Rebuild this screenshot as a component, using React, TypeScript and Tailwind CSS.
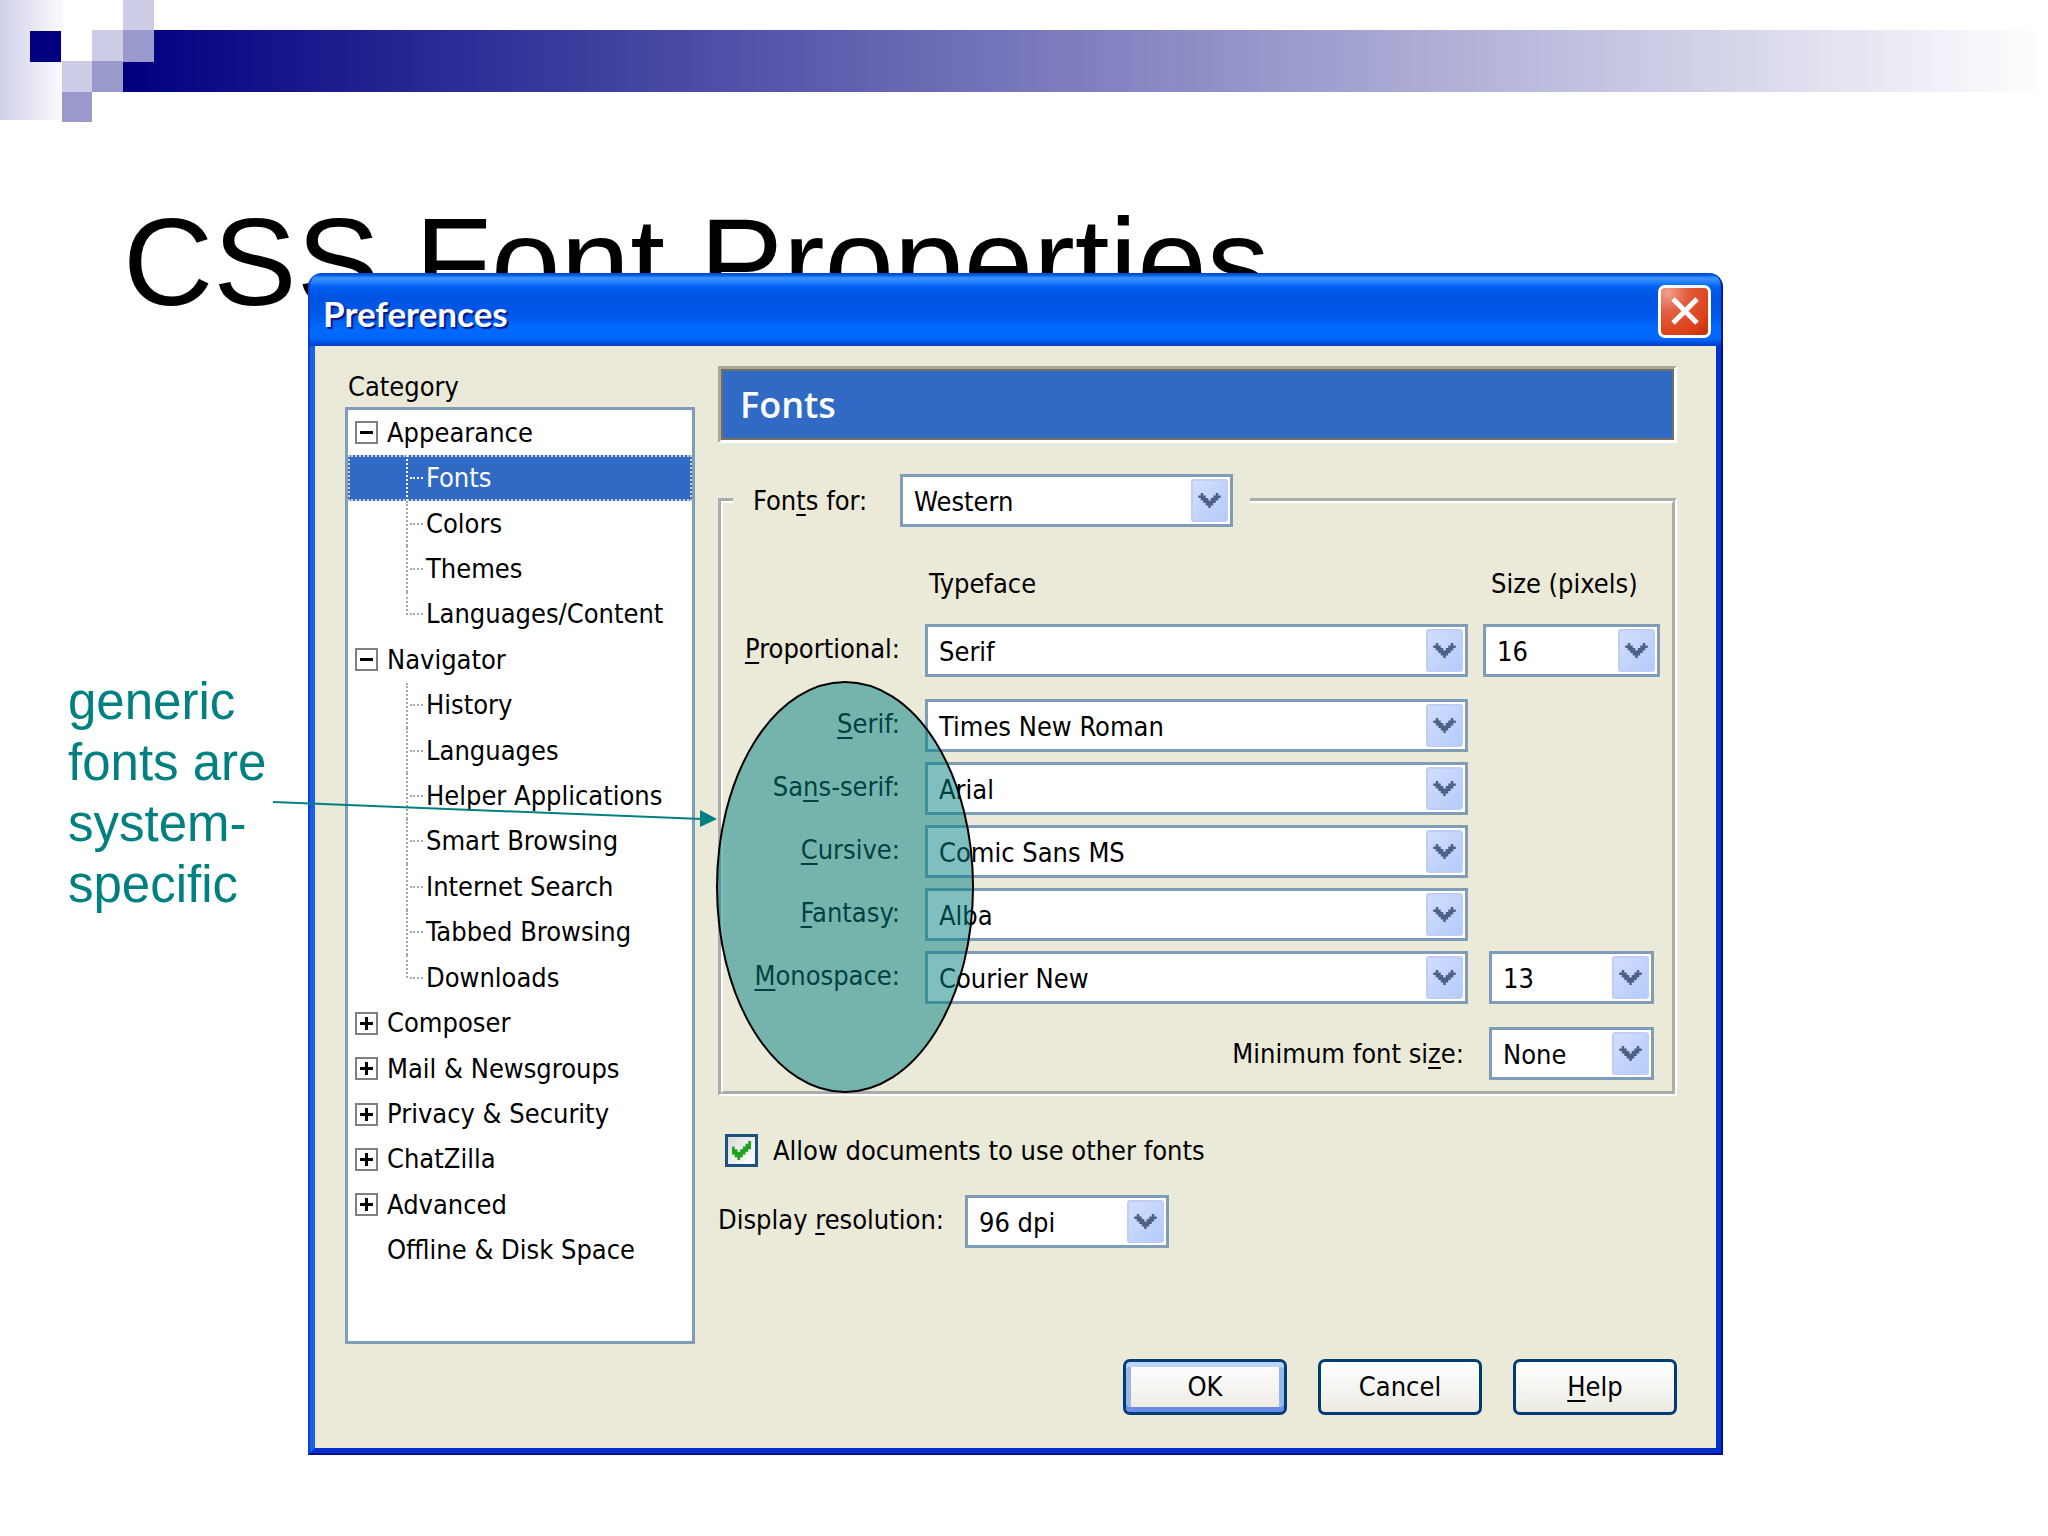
import React, { useState } from 'react';
import clsx from 'clsx';

interface TreeItem {
  label: string;
  children?: string[];
  open?: boolean;
}

const categories: TreeItem[] = [
  { label: 'Appearance', open: true, children: ['Fonts', 'Colors', 'Themes', 'Languages/Content'] },
  {
    label: 'Navigator',
    open: true,
    children: [
      'History',
      'Languages',
      'Helper Applications',
      'Smart Browsing',
      'Internet Search',
      'Tabbed Browsing',
      'Downloads',
    ],
  },
  { label: 'Composer', children: [] },
  { label: 'Mail & Newsgroups', children: [] },
  { label: 'Privacy & Security', children: [] },
  { label: 'ChatZilla', children: [] },
  { label: 'Advanced', children: [] },
  { label: 'Offline & Disk Space' },
];

const typefaces = [
  { id: 'serif', label: <><u>S</u>erif:</>, value: 'Times New Roman' },
  { id: 'sans', label: <>Sa<u>n</u>s-serif:</>, value: 'Arial' },
  { id: 'cursive', label: <><u>C</u>ursive:</>, value: 'Comic Sans MS' },
  { id: 'fantasy', label: <><u>F</u>antasy:</>, value: 'Alba' },
  { id: 'mono', label: <><u>M</u>onospace:</>, value: 'Courier New', size: '13' },
];

function SlideHeader() {
  return (
    <header className="flex items-start">
      <svg width="154" height="123" viewBox="0 0 154 123" className="relative z-10 shrink-0" shapeRendering="crispEdges">
        <defs>
          <linearGradient id="fade">
            <stop offset="0" stopColor="#d0d0e8" />
            <stop offset="1" stopColor="#fbfbfe" />
          </linearGradient>
        </defs>
        <rect width="63" height="120" fill="url(#fade)" />
        <rect x="30" y="31" width="31" height="31" fill="#000080" />
        <rect x="123" y="0" width="31" height="31" fill="#cccce6" />
        <rect x="92" y="30" width="31" height="31" fill="#cccce6" />
        <rect x="62" y="61" width="30" height="31" fill="#cccce6" />
        <rect x="123" y="30" width="31" height="32" fill="#9999cc" />
        <rect x="92" y="61" width="31" height="31" fill="#9999cc" />
        <rect x="62" y="92" width="30" height="30" fill="#9999cc" />
      </svg>
      <div className="-ml-[31px] mt-[30px] h-[62px] flex-1 bg-linear-to-r/srgb from-[#000080] to-white" />
    </header>
  );
}

function ArrowButton() {
  return (
    <span className="pointer-events-none absolute inset-y-[5px] right-[5px] flex w-[37px] items-center justify-center rounded-[3px] border-2 border-[#c0cdf8] bg-linear-to-br from-[#d3defd] to-[#b3cbfb]">
      <svg width="23" height="15" viewBox="0 0 9 6" fill="#4d6185">
        <path d="M1 0h1v1h1v1h1v1h1v-1h1v-1h1v-1h1v1h1v1h-1v1h-1v1h-1v1h-1v1h-1v-1h-1v-1h-1v-1h-1v-1h-1v-1h1z" />
      </svg>
    </span>
  );
}

interface SelectProps {
  id: string;
  value: string;
  label?: string;
  className?: string;
}

function Select({ id, value, label, className }: SelectProps) {
  return (
    <div className={clsx('relative h-[53px]', className)}>
      <select
        id={id}
        aria-label={label}
        defaultValue={value}
        className="h-full w-full appearance-none border-3 border-[#7f9db9] bg-white pt-[2px] pr-10 pl-[11px]"
      >
        <option>{value}</option>
      </select>
      <ArrowButton />
    </div>
  );
}

function Toggle({ open }: { open?: boolean }) {
  return (
    <svg width="23" height="23" viewBox="0 0 23 23" className="shrink-0" shapeRendering="crispEdges">
      <rect x="1" y="1" width="21" height="21" fill="#fff" stroke="#808080" strokeWidth="2" />
      <path d={open ? 'M5 11.5h13' : 'M5 11.5h13M11.5 5v13'} stroke="#000" strokeWidth="3" />
    </svg>
  );
}

function CategoryTree() {
  const [selected, setSelected] = useState('Fonts');

  return (
    <div className="w-[350px] shrink-0">
      <h2 className="h-[41px] pl-[3px] leading-[41px]">Category</h2>
      <div className="border-3 border-[#7f9db9] bg-white pb-[68px]">
        <div className="grid h-[863px] auto-rows-fr">
          {categories.map((item) => (
            <React.Fragment key={item.label}>
              <button className="flex min-h-0 items-center gap-[9px] pl-[7px] text-left">
                {item.children ? <Toggle open={item.open} /> : <span className="w-[23px]" />}
                {item.label}
              </button>
              {item.children?.map((child, i) => {
                const active = child === selected;
                const last = i === item.children!.length - 1;
                return (
                  <button
                    key={child}
                    onClick={() => setSelected(child)}
                    className={clsx(
                      'flex min-h-0 items-stretch border-2 border-dotted pl-[56px] text-left',
                      active ? 'border-[#d8d0b8] bg-[#316ac5] text-white' : 'border-transparent',
                    )}
                  >
                    <span
                      className={clsx(
                        '-mt-[2px] w-0 border-l-2 border-dotted',
                        active ? 'border-white' : 'border-[#a8a8a8]',
                        last ? 'mb-[20px]' : '-mb-[2px]',
                      )}
                    />
                    <span
                      className={clsx(
                        'mr-[3px] ml-[2px] w-[13px] self-center border-t-2 border-dotted',
                        active ? 'border-white' : 'border-[#a8a8a8]',
                      )}
                    />
                    <span className="self-center leading-[36px]">{child}</span>
                  </button>
                );
              })}
            </React.Fragment>
          ))}
        </div>
      </div>
    </div>
  );
}

function FontSettings() {
  return (
    <div className="relative mt-[31px]">
      <fieldset className="min-w-0 border-[5px] border-white pb-[11px] [border-style:groove]">
        <legend className="ml-[10px] flex items-center pr-[17px] pl-[20px]">
          <label htmlFor="charset" className="w-[147px]">
            Fon<u>t</u>s for:
          </label>
          <Select id="charset" value="Western" className="w-[333px]" />
        </legend>
        <div className="mt-[37px] grid grid-cols-[187px_minmax(0,1fr)_177px] items-center gap-x-[15px] gap-y-[10px] pr-[12px]">
          <span className="col-start-2 mb-[10px] pl-[4px] leading-[40px]">Typeface</span>
          <span className="mb-[10px] pl-[8px] leading-[40px]">Size (pixels)</span>

          <label htmlFor="proportional" className="mb-[15px] pr-[10px] text-right">
            <u>P</u>roportional:
          </label>
          <Select id="proportional" value="Serif" className="mb-[12px]" />
          <Select id="proportional-size" label="Proportional size" value="16" className="mb-[12px]" />

          {typefaces.map((face) => (
            <React.Fragment key={face.id}>
              <label htmlFor={face.id} className="col-start-1 pr-[10px] pb-[4px] text-right">
                {face.label}
              </label>
              <Select id={face.id} value={face.value} />
              {face.size && (
                <Select id={`${face.id}-size`} label="Monospace size" value={face.size} className="mx-[6px]" />
              )}
            </React.Fragment>
          ))}

          <label htmlFor="minimum" className="col-span-2 col-start-1 mt-[13px] pr-[4px] text-right">
            Minimum font si<u>z</u>e:
          </label>
          <Select id="minimum" value="None" className="mx-[6px] mt-[13px]" />
        </div>
      </fieldset>
      <svg
        width="260"
        height="413"
        viewBox="0 0 260 413"
        className="pointer-events-none absolute top-[207px] -left-[3px]"
      >
        <ellipse cx="130" cy="206" rx="128" ry="205" fill="#008080" fillOpacity="0.5" stroke="#000" strokeWidth="2" />
      </svg>
    </div>
  );
}

function DialogButton({ children, primary }: { children: React.ReactNode; primary?: boolean }) {
  return (
    <button
      className={clsx(
        'h-[56px] w-[164px] rounded-[7px] border-3 border-[#003c74] bg-linear-to-b from-white via-[#f5f5f2] to-[#eceae0]',
        primary &&
          'shadow-[inset_0_5px_0_#bcd4f6,inset_0_-5px_0_#6d8ce8,inset_5px_0_0_#98b8ea,inset_-5px_0_0_#98b8ea]',
      )}
    >
      {children}
    </button>
  );
}

function PreferencesDialog() {
  const [allowOther, setAllowOther] = useState(true);

  return (
    <section className="relative mr-[325px] min-w-0 flex-1 font-['DejaVu_Sans_Condensed','DejaVu_Sans',sans-serif] text-[27px] leading-[40px] text-black [&_u]:decoration-2 [&_u]:underline-offset-[4px]">
      <div className="flex h-[73px] items-center justify-between rounded-t-[14px] border-x-2 border-l-[#0a3fdc] border-r-[#00189c] bg-[linear-gradient(#0048d0_0,#0058e0_2px,#3a93ff_5px,#2a86ff_8px,#0060f0_14px,#0053e0_24px,#0058ea_42px,#006aff_55px,#0066fa_66px,#0040cc_72px)] pr-[10px] pl-[13px]">
        <h2 className="pt-[6px] font-['Lato',sans-serif] text-[35px] font-bold text-white [text-shadow:2px_2px_1px_#0a1883]">
          Preferences
        </h2>
        <button
          aria-label="Close"
          className="mt-[3px] flex size-[53px] items-center justify-center rounded-[7px] border-3 border-white bg-[radial-gradient(circle_at_15%_10%,#f0a090_0,#e25c3c_35%,#dc4018_75%,#b83010_100%)]"
        >
          <svg width="30" height="30" viewBox="0 0 30 30">
            <path d="M3 3L27 27M27 3L3 27" stroke="#fff" strokeWidth="5" />
          </svg>
        </button>
      </div>
      <div className="border-2 border-t-0 border-r-[#00108c] border-b-[#00108c] border-l-[#0a3fdc]">
        <div className="border-5 border-t-0 border-r-[#0430cc] border-b-[#0430cc] border-l-[#1660ee] bg-[#ebe9d8] pt-5 pr-[39px] pb-[33px] pl-[30px]">
          <div className="flex gap-[23px]">
            <CategoryTree />
            <div className="min-w-0 flex-1">
              <div className="border-3 border-t-[#aca899] border-r-white border-b-white border-l-[#aca899]">
                <h3 className="border-2 border-[#716f64] bg-[#316ac5] pl-[17px] font-['Open_Sans',sans-serif] text-[36px] leading-[67px] font-semibold text-white">
                  Fonts
                </h3>
              </div>
              <FontSettings />
              <label className="mt-[38px] flex h-[33px] items-center gap-[15px] pl-[7px]">
                <span className="relative flex">
                  <input
                    type="checkbox"
                    checked={allowOther}
                    onChange={(e) => setAllowOther(e.target.checked)}
                    className="size-[33px] appearance-none border-3 border-[#1c5180] bg-linear-to-br from-[#dcdcd7] to-white"
                  />
                  {allowOther && (
                    <svg
                      width="19"
                      height="19"
                      viewBox="0 0 7 7"
                      fill="#21a121"
                      className="pointer-events-none absolute top-[7px] left-[7px]"
                    >
                      <path d="M0 2h1v1h1v1h1v-1h1v-1h1v-1h1v-1h1v3h-1v1h-1v1h-1v1h-1v1h-1v-1h-1v-1h-1z" />
                    </svg>
                  )}
                </span>
                Allow documents to use other fonts
              </label>
              <div className="mt-[28px] flex items-center">
                <label htmlFor="resolution" className="w-[247px] pb-[3px]">
                  Display <u>r</u>esolution:
                </label>
                <Select id="resolution" value="96 dpi" className="w-[204px]" />
              </div>
            </div>
          </div>
          <div className="mt-[15px] flex justify-end gap-[31px]">
            <DialogButton primary>OK</DialogButton>
            <DialogButton>Cancel</DialogButton>
            <DialogButton>
              <u>H</u>elp
            </DialogButton>
          </div>
        </div>
      </div>
    </section>
  );
}

function App() {
  return (
    <div className="min-h-screen bg-white font-['Liberation_Sans',Arial,sans-serif]">
      <SlideHeader />
      <main>
        <h1 className="mt-[76px] pl-[123px] text-[125px] leading-[125px] text-black">CSS Font Properties</h1>
        <div className="-mt-[51px] flex items-start">
          <aside className="relative z-20 w-[308px] shrink-0 pt-[398px] pr-[40px] pl-[68px]">
            <p className="text-[51px] leading-[61px] text-[#008080]">generic fonts are system-specific</p>
            <svg
              width="446"
              height="30"
              viewBox="0 0 446 30"
              className="pointer-events-none absolute top-[526px] left-[272px]"
            >
              <path d="M1 3L430 20" stroke="#008080" strokeWidth="2" />
              <path d="M428 11L445 20L428 28Z" fill="#008080" />
            </svg>
          </aside>
          <PreferencesDialog />
        </div>
      </main>
    </div>
  );
}

export default App;
